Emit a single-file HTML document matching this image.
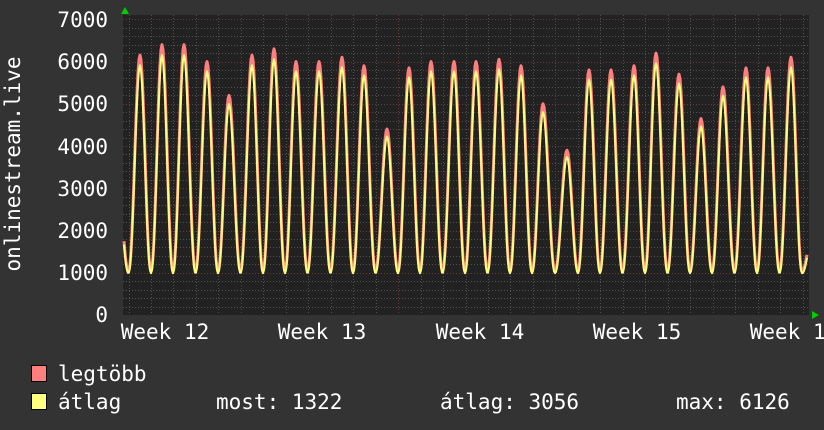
<!DOCTYPE html>
<html><head><meta charset="utf-8"><style>
html,body{margin:0;padding:0;background:#333;}
body{width:824px;height:430px;overflow:hidden;position:relative;font-family:"DejaVu Sans Mono","Liberation Mono",monospace;color:#fff;}
svg{position:absolute;left:0;top:0;}
</style></head><body>
<svg id="g" width="824" height="430" xmlns="http://www.w3.org/2000/svg" font-family="DejaVu Sans Mono, Liberation Mono, monospace" font-size="21" fill="#fff">
<rect x="0" y="0" width="824" height="430" fill="#333"/>
<rect x="123" y="15" width="686" height="300" fill="#222"/>
<g id="grid"></g>
<g id="data"></g>
<polygon points="121,14 129,14 125,7" fill="#0c0"/>
<polygon points="812,311 812,319 819,315" fill="#0c0"/>
<g text-anchor="end">
<text x="108" y="27">7000</text>
<text x="108" y="69">6000</text>
<text x="108" y="111">5000</text>
<text x="108" y="154">4000</text>
<text x="108" y="196">3000</text>
<text x="108" y="238">2000</text>
<text x="108" y="280">1000</text>
<text x="108" y="322">0</text>
</g>
<text transform="translate(20,164) rotate(-90)" text-anchor="middle">onlinestream.live</text>
<g text-anchor="middle">
<text x="165" y="339">Week 12</text>
<text x="322" y="339">Week 13</text>
<text x="480" y="339">Week 14</text>
<text x="637" y="339">Week 15</text>
<text x="794" y="339">Week 16</text>
</g>
<rect x="31.5" y="365.5" width="15" height="16" fill="#ff7f7f" stroke="#000"/>
<rect x="31.5" y="393.5" width="15" height="16" fill="#ffff7f" stroke="#000"/>
<text x="58" y="381">legtöbb</text>
<text x="58" y="409">átlag</text>
<text x="216" y="409">most: 1322</text>
<text x="440" y="409">átlag: 3056</text>
<text x="676" y="409">max: 6126</text>
</svg>
<script>
var ns="http://www.w3.org/2000/svg";
function yv(v){return 315-v*0.04224;}
var grid=document.getElementById('grid');
function line(x1,y1,x2,y2,c){var l=document.createElementNS(ns,'line');l.setAttribute('x1',x1);l.setAttribute('y1',y1);l.setAttribute('x2',x2);l.setAttribute('y2',y2);l.setAttribute('stroke',c);l.setAttribute('stroke-width',1);l.setAttribute('stroke-dasharray','1,2');l.setAttribute('shape-rendering','crispEdges');grid.appendChild(l);}
for(var v=200;v<=7000;v+=200){var y=Math.round(yv(v))+.5;line(123,y,809,y,v%1000==0?'#6a3a3a':'#505050');}
for(var x=128.5;x<809;x+=22.47){var xx=Math.round(x)+.5;var m=((x-242)%157.3+157.3)%157.3;var maj=m<3||m>154.3;line(xx,15,xx,315,maj?'#6a3a3a':'#505050');}
var peaks=[[117,3400],[140,6150],[162,6400],[184,6400],[207,6000],[229,5200],[252,6150],[274,6300],[296,6000],[319,6000],[342,6100],[364,5900],[387,4400],[409,5850],[431,6000],[454,6000],[476,6000],[499,6050],[521,5900],[543,5000],[567,3900],[589,5800],[611,5800],[634,5900],[656,6200],[679,5700],[701,4650],[723,5400],[746,5850],[768,5850],[791,6100],[813,2000]];
function val(x,yel){
 var i=0;while(i<peaks.length-2&&peaks[i+1][0]<x)i++;
 var a=peaks[i],b=peaks[i+1];
 var t=(x-a[0])/(b[0]-a[0]);
 var mid=1050,v;
 if(t<0.5){var s=t/0.5;v=mid+(a[1]-mid)*Math.pow(0.5+0.5*Math.cos(Math.PI*s),1.1);}
 else{var s=(t-0.5)/0.5;v=mid+(b[1]-mid)*Math.pow(0.5-0.5*Math.cos(Math.PI*s),1.1);}
 if(yel)v=v-(v-mid)*0.035-60;
 return v;
}
function pl(yel,col,w){var pts=[];for(var x=124;x<=807;x+=1){pts.push(x+','+yv(val(x,yel)).toFixed(1));}var p=document.createElementNS(ns,'polyline');p.setAttribute('points',pts.join(' '));p.setAttribute('fill','none');p.setAttribute('stroke',col);p.setAttribute('stroke-width',w);p.setAttribute('stroke-linejoin','round');document.getElementById('data').appendChild(p);}
pl(false,'#ff7f7f',3);
pl(true,'#ffff7f',2);
</script>
</body></html>
